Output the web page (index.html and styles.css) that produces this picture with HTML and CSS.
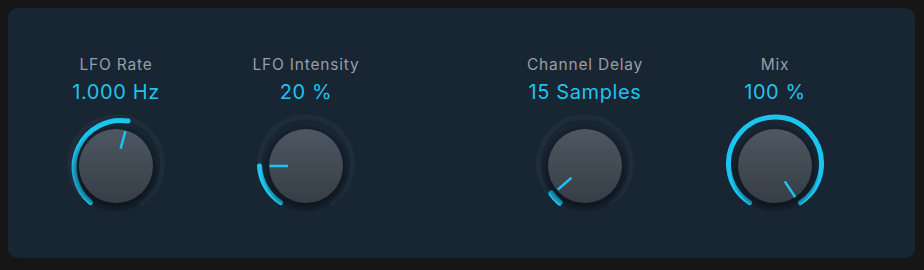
FILE: index.html
```
<!DOCTYPE html>
<html lang="en">

<head>
    <meta charset="UTF-8">
    <meta name="viewport" content="width=device-width, initial-scale=1.0">
    <title>Modulation Delay</title>
    <link rel="stylesheet" href="styles.css">
</head>

<body>
    <!-- shared gradients for all knobs -->
    <svg class="defs" width="0" height="0">
        <defs>
            <linearGradient id="capFill" x1="0" y1="0" x2="0" y2="1">
                <stop offset="0" stop-color="#4e5762" />
                <stop offset="1" stop-color="#363d46" />
            </linearGradient>
            <radialGradient id="capShadow" cx="0.5" cy="0.53" r="0.5">
                <stop offset="0.78" stop-color="#0b121a" stop-opacity="0.75" />
                <stop offset="1" stop-color="#0b121a" stop-opacity="0" />
            </radialGradient>
        </defs>
    </svg>

    <div class="panel">
        <div class="group">
            <div class="control">
                <div class="label">LFO Rate</div>
                <div class="value">1.000 Hz</div>
                <svg class="knob" viewBox="0 0 110 110" width="110" height="110">
                    <path class="track" d="M29.59,91.52 A46.5,46.5 0 1 1 80.41,91.52" />
                    <path class="level" d="M29.59,91.52 A46.5,46.5 0 0 1 67.03,10.08" />
                    <circle cx="55" cy="56" r="45" fill="url(#capShadow)" />
                    <circle cx="55" cy="55" r="37" fill="url(#capFill)" />
                    <line class="pointer" x1="59.66" y1="37.61" x2="64.32" y2="20.23" />
                </svg>
            </div>
            <div class="control">
                <div class="label">LFO Intensity</div>
                <div class="value">20 %</div>
                <svg class="knob" viewBox="0 0 110 110" width="110" height="110">
                    <path class="track" d="M29.59,91.52 A46.5,46.5 0 1 1 80.41,91.52" />
                    <path class="level" d="M29.59,91.52 A46.5,46.5 0 0 1 8.5,55" />
                    <circle cx="55" cy="56" r="45" fill="url(#capShadow)" />
                    <circle cx="55" cy="55" r="37" fill="url(#capFill)" />
                    <line class="pointer" x1="37" y1="55" x2="18.5" y2="55" />
                </svg>
            </div>
        </div>

        <div class="group">
            <div class="control">
                <div class="label">Channel Delay</div>
                <div class="value">15 Samples</div>
                <svg class="knob" viewBox="0 0 110 110" width="110" height="110">
                    <path class="track" d="M29.59,91.52 A46.5,46.5 0 1 1 80.41,91.52" />
                    <path class="level thick" d="M29.59,91.52 A46.5,46.5 0 0 1 21.5,82.5" />
                    <circle cx="55" cy="56" r="45" fill="url(#capShadow)" />
                    <circle cx="55" cy="55" r="37" fill="url(#capFill)" />
                    <line class="pointer" x1="41.42" y1="66.81" x2="27.83" y2="78.62" />
                </svg>
            </div>
            <div class="control">
                <div class="label">Mix</div>
                <div class="value">100 %</div>
                <svg class="knob" viewBox="0 0 110 110" width="110" height="110">
                    <path class="track" d="M29.59,91.52 A46.5,46.5 0 1 1 80.41,91.52" />
                    <path class="level" d="M29.59,91.52 A46.5,46.5 0 1 1 80.41,91.52" />
                    <circle cx="55" cy="56" r="45" fill="url(#capShadow)" />
                    <circle cx="55" cy="55" r="37" fill="url(#capFill)" />
                    <line class="pointer" x1="64.8" y1="70.4" x2="75.2" y2="86.1" />
                </svg>
            </div>
        </div>
    </div>
</body>

</html>
```

FILE: styles.css
```
* {
    margin: 0;
    padding: 0;
    box-sizing: border-box;
}

body {
    background-color: #161616;
    padding: 8px;
    width: 924px;
    height: 270px;
    font-family: Inter, "Liberation Sans", Arial, sans-serif;
}

.defs {
    position: absolute;
}

.panel {
    background-color: #182533;
    border-radius: 10px;
    width: 907px;
    height: 250px;
    display: flex;
    gap: 129px;
    padding: 47px 0 0 33px;
}

.group {
    display: flex;
    gap: 40px;
}

.control {
    width: 150px;
    display: flex;
    flex-direction: column;
    align-items: center;
}

.label {
    color: #989ea5;
    font-size: 15.5px;
    letter-spacing: 0.8px;
    line-height: 20px;
}

.value {
    color: #1fc3ee;
    font-size: 20px;
    letter-spacing: 0.6px;
    line-height: 24px;
    margin-top: 5px;
}

.knob {
    display: block;
    margin-top: 7px;
}

.knob path {
    fill: none;
    stroke-width: 5;
    stroke-linecap: round;
}

.knob .track {
    stroke: #1f2d3b;
}

.knob .level {
    stroke: #1cc4f0;
}

.knob .thick {
    stroke-width: 6;
}

.pointer {
    stroke: #1cc4f0;
    stroke-width: 2.5;
}
```
